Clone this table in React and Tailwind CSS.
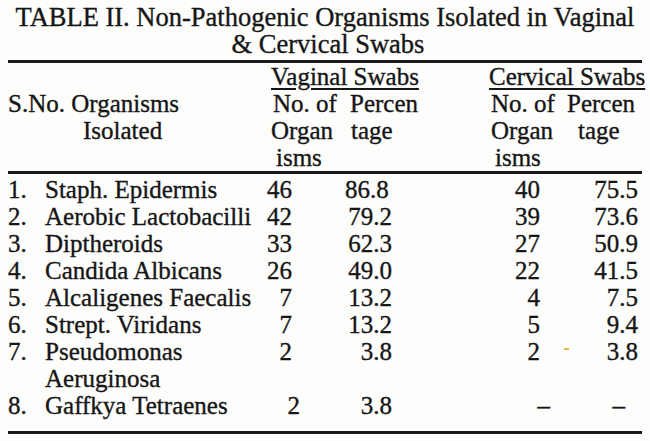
import React from "react";

const rows = [
  { n: "1.", name: ["Staph. Epidermis"], vn: "46", vp: "86.8", cn: "40", cp: "75.5", vpPad: "pr-[104px]" },
  { n: "2.", name: ["Aerobic Lactobacilli"], vn: "42", vp: "79.2", cn: "39", cp: "73.6" },
  { n: "3.", name: ["Diptheroids"], vn: "33", vp: "62.3", cn: "27", cp: "50.9" },
  { n: "4.", name: ["Candida Albicans"], vn: "26", vp: "49.0", cn: "22", cp: "41.5" },
  { n: "5.", name: ["Alcaligenes Faecalis"], vn: "7", vp: "13.2", cn: "4", cp: "7.5" },
  { n: "6.", name: ["Strept. Viridans"], vn: "7", vp: "13.2", cn: "5", cp: "9.4" },
  { n: "7.", name: ["Pseudomonas", "Aeruginosa"], vn: "2", vp: "3.8", cn: "2", cp: "3.8", smudge: true },
  { n: "8.", name: ["Gaffkya Tetraenes"], vn: "2", vp: "3.8", cn: "–", cp: "–", vnPad: "pr-[45px]", cnPad: "pr-[17px]", cpPad: "pr-[17px]" },
];

const App = () => {
  return (
    <div className="w-[650px] h-[441px] bg-[#fdfdfc] text-[#161616] font-['Liberation_Serif','Times_New_Roman',serif] [-webkit-text-stroke:0.35px_#161616] overflow-hidden">
      <div className="ml-[8px] w-[634px] pt-[4px]">
        {/* title */}
        <div className="text-center text-[26.5px] leading-[27px] whitespace-nowrap">
          <div>TABLE II. Non-Pathogenic Organisms Isolated in Vaginal</div>
          <div className="pl-[6px]">&amp; Cervical Swabs</div>
        </div>
        <div className="mt-[2px] border-t-[3px] border-[#1a1a1a]" />

        <div className="grid grid-cols-[37px_220px_80px_140px_82px_75px] text-[25px] leading-[27px] whitespace-nowrap">
          {/* header */}
          <div className="col-span-2" />
          <div className="col-span-2 pl-[6px]">
            <span className="underline decoration-2 underline-offset-[3px]">Vaginal Swabs</span>
          </div>
          <div className="col-span-2 pl-[4px]">
            <span className="underline decoration-2 underline-offset-[3px]">Cervical Swabs</span>
          </div>

          <div className="col-span-2">S.No. Organisms</div>
          <div className="pl-[8px]">No. of</div>
          <div className="pl-[5px]">Percen</div>
          <div className="pl-[6px]">No. of</div>
          <div>Percen</div>

          <div />
          <div className="pl-[38px]">Isolated</div>
          <div className="pl-[6px]">Organ</div>
          <div className="pl-[6px]">tage</div>
          <div className="pl-[6px]">Organ</div>
          <div className="pl-[11px]">tage</div>

          <div className="col-span-2" />
          <div className="pl-[11px]">isms</div>
          <div />
          <div className="pl-[10px]">isms</div>
          <div />

          <div className="col-span-6 border-t-[3px] border-[#1a1a1a] mb-[2px]" />

          {/* body */}
          {rows.map((r) => (
            <React.Fragment key={r.n}>
              <div>{r.n}</div>
              <div>
                {r.name.map((line) => (
                  <div key={line}>{line}</div>
                ))}
              </div>
              <div className={`text-right ${r.vnPad || "pr-[53px]"}`}>{r.vn}</div>
              <div className={`text-right ${r.vpPad || "pr-[93px]"}`}>{r.vp}</div>
              <div className={`text-right ${r.cnPad || "pr-[27px]"}`}>
                {r.cn}
                {r.smudge && (
                  <span className="relative">
                    <span className="absolute left-[24px] top-[10px] w-[5px] h-[2px] bg-[#e7b24a]" />
                  </span>
                )}
              </div>
              <div className={`text-right ${r.cpPad || "pr-[4px]"}`}>{r.cp}</div>
            </React.Fragment>
          ))}

          <div className="col-span-6 mt-[12px] border-t-[3px] border-[#1a1a1a]" />
        </div>
      </div>
    </div>
  );
};

export default App;
